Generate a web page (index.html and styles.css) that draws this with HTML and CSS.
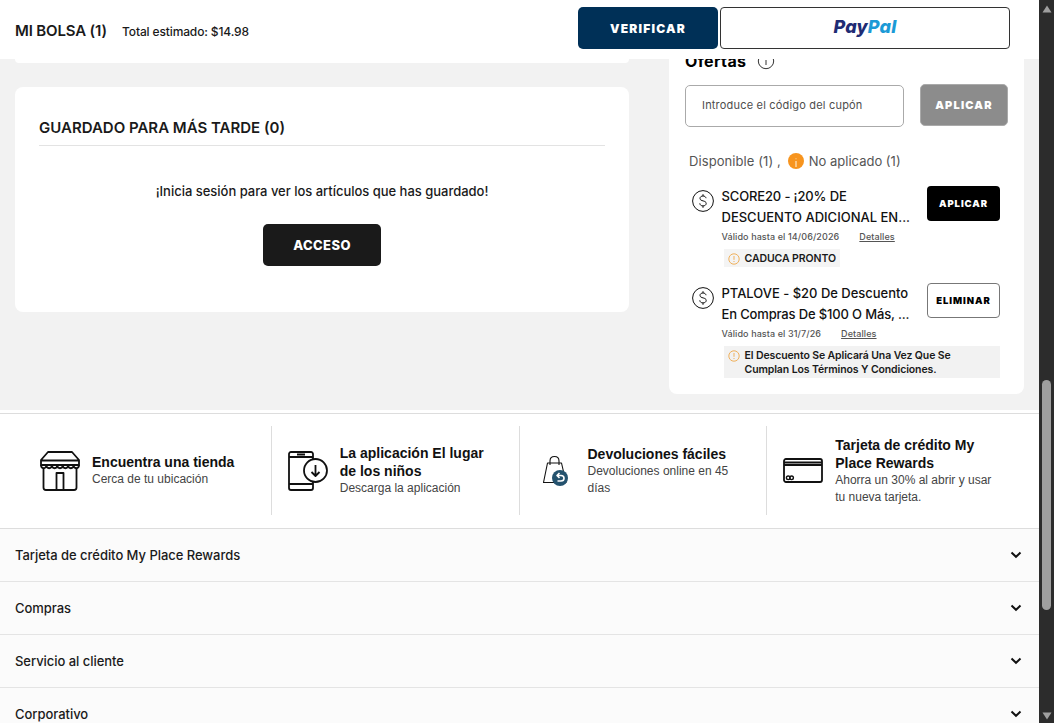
FILE: index.html
```html
<!DOCTYPE html>
<html lang="es">
<head>
<meta charset="utf-8">
<title>Mi bolsa</title>
<link rel="stylesheet" href="styles.css">
</head>
<body>
<div class="page">
  <header class="bag-bar">
    <h1 class="bag-title">MI BOLSA (1)</h1>
    <span class="bag-total">Total estimado: $14.98</span>
    <div class="bag-actions">
      <button class="btn checkout">VERIFICAR</button>
      <button class="btn paypal"><span class="pay">Pay</span><span class="pal">Pal</span></button>
    </div>
  </header>

  <main class="bag">
    <div class="bag-main">
      <div class="items-end"></div>
      <section class="card saved">
        <h2 class="saved-title">GUARDADO PARA MÁS TARDE (0)</h2>
        <p class="saved-text">¡Inicia sesión para ver los artículos que has guardado!</p>
        <button class="btn login">ACCESO</button>
      </section>
    </div>
    <aside class="offers">
      <div class="offers-head">
        <h2 class="offers-title">Ofertas</h2>
        <svg class="info" viewBox="0 0 18 18"><circle cx="9" cy="9" r="7.7"/><path d="M9 8v5M9 5v1.2"/></svg>
      </div>
      <div class="code-row">
        <div class="code-input">Introduce el código del cupón</div>
        <button class="btn code-apply">APLICAR</button>
      </div>
      <div class="status">
        <span class="available">Disponible (1) ,</span>
        <svg class="status-icon" viewBox="0 0 16 16"><circle cx="8" cy="8" r="8" fill="#f7941e"/><path d="M8 8v6" stroke="#fde0b8" stroke-width="1.3"/><circle cx="8" cy="5.8" r=".7" fill="#fbc27c"/></svg>
        <span class="not-applied">No aplicado (1)</span>
      </div>

      <article class="coupon">
        <svg class="coin" viewBox="0 0 22 22"><circle cx="11" cy="11" r="10.4"/><path d="M14 8.200C13.800 6.800 12.700 6 11 6 9.300 6 8 6.900 8 8.400c0 3.300 6.200 1.700 6.200 5 0 1.500-1.300 2.500-3.200 2.500s-3.100-1-3.200-2.600M11 4.200V6M11 15.900v1.900"/></svg>
        <div class="coupon-body">
          <h3 class="coupon-title"><span class="t1">SCORE20 - ¡20% DE</span><br><span class="t2">DESCUENTO ADICIONAL EN...</span></h3>
          <div class="coupon-meta"><span class="valid">Válido hasta el 14/06/2026</span><a class="details">Detalles</a></div>
          <div class="tag"><svg class="tag-icon" viewBox="0 0 12 12"><circle cx="6" cy="6" r="5.200"/><path d="M6 3v3.800M6 8v1"/></svg><span class="soon">CADUCA PRONTO</span></div>
        </div>
        <button class="btn coupon-btn apply">APLICAR</button>
      </article>

      <article class="coupon">
        <svg class="coin" viewBox="0 0 22 22"><circle cx="11" cy="11" r="10.4"/><path d="M14 8.200C13.800 6.800 12.700 6 11 6 9.300 6 8 6.900 8 8.400c0 3.300 6.200 1.700 6.200 5 0 1.500-1.300 2.500-3.200 2.500s-3.100-1-3.200-2.600M11 4.200V6M11 15.900v1.900"/></svg>
        <div class="coupon-body">
          <h3 class="coupon-title"><span class="t3">PTALOVE - $20 De Descuento</span><br><span class="t4">En Compras De $100 O Más, ...</span></h3>
          <div class="coupon-meta"><span class="valid">Válido hasta el 31/7/26</span><a class="details">Detalles</a></div>
          <div class="tag long"><svg class="tag-icon" viewBox="0 0 12 12"><circle cx="6" cy="6" r="5.200"/><path d="M6 3v3.800M6 8v1"/></svg><span>El Descuento Se Aplicará Una Vez Que Se<br>Cumplan Los Términos Y Condiciones.</span></div>
        </div>
        <button class="btn coupon-btn remove">ELIMINAR</button>
      </article>
    </aside>
  </main>

  <section class="features">
    <div class="feature">
      <svg class="f-icon" viewBox="0 0 40 40"><path d="M8 1h24l7 8v5H1V9zM1 9.500h38M3.500 17v19.500a2.500 2.500 0 0 0 2.500 2.500h28a2.500 2.500 0 0 0 2.500-2.500V17M16.500 39V22h7v17"/><path d="M1 14c0 4.300 5.400 4.300 5.400 0 0 4.300 5.500 4.300 5.500 0 0 4.300 5.400 4.300 5.400 0 0 4.300 5.400 4.300 5.400 0 0 4.300 5.400 4.300 5.400 0 0 4.300 5.500 4.300 5.500 0 0 4.300 5.400 4.300 5.400 0"/></svg>
      <div><h3 class="f-title">Encuentra una tienda</h3><p class="f-text">Cerca de tu ubicación</p></div>
    </div>
    <div class="feature">
      <svg class="f-icon" viewBox="0 0 40 40"><path d="M25 8V3a2 2 0 0 0-2-2H3a2 2 0 0 0-2 2v34a2 2 0 0 0 2 2h20a2 2 0 0 0 2-2v-6M1 6h24M1 33h24M9 3.500h8"/><circle cx="27.500" cy="19.500" r="11.500" fill="#fff"/><path d="M27.500 14v10.500M23.500 21l4 4 4-4"/></svg>
      <div><h3 class="f-title">La aplicación El lugar<br>de los niños</h3><p class="f-text">Descarga la aplicación</p></div>
    </div>
    <div class="feature">
      <svg class="f-icon bag-icon" viewBox="0 0 40 40"><path d="M11.500 12h14l4.500 19.500H7.500zM14 14v-4c0-6 9-6 9 0v4"/><circle cx="24" cy="27" r="8" fill="#24526e" stroke="none"/><path d="M21.500 30H25c4 0 4-5.500 0-5.500h-3.500M23.500 22 21 24.500l2.500 2.500" stroke="#fff" stroke-width="1.600"/></svg>
      <div><h3 class="f-title">Devoluciones fáciles</h3><p class="f-text">Devoluciones online en 45<br>días</p></div>
    </div>
    <div class="feature">
      <svg class="f-icon" viewBox="0 0 40 40"><rect x="1" y="8" width="38" height="23" rx="2"/><path d="M1 11.500h38M1 14h38"/><circle cx="5.200" cy="26.800" r="1.800" stroke-width="1.400"/><circle cx="8.600" cy="26.800" r="1.800" stroke-width="1.400"/></svg>
      <div><h3 class="f-title">Tarjeta de crédito My<br>Place Rewards</h3><p class="f-text">Ahorra un 30% al abrir y usar<br>tu nueva tarjeta.</p></div>
    </div>
  </section>

  <nav class="links">
    <div class="link-row"><span>Tarjeta de crédito My Place Rewards</span><svg class="chev" viewBox="0 0 12 8"><path d="M1.500 1.500 6 5.800l4.500-4.300"/></svg></div>
    <div class="link-row"><span>Compras</span><svg class="chev" viewBox="0 0 12 8"><path d="M1.500 1.500 6 5.800l4.500-4.300"/></svg></div>
    <div class="link-row"><span>Servicio al cliente</span><svg class="chev" viewBox="0 0 12 8"><path d="M1.500 1.500 6 5.800l4.500-4.300"/></svg></div>
    <div class="link-row"><span>Corporativo</span><svg class="chev" viewBox="0 0 12 8"><path d="M1.500 1.500 6 5.800l4.500-4.300"/></svg></div>
  </nav>
</div>
<div class="scrollbar">
  <svg class="arrow" viewBox="0 0 10 8"><path d="M5 .5 9.500 7.500H.5z"/></svg>
  <div class="thumb"></div>
  <svg class="arrow" viewBox="0 0 10 8"><path d="M.5.5h9L5 7.500z"/></svg>
</div>
</body>
</html>
```

FILE: styles.css
```css
* { box-sizing: border-box; margin: 0; padding: 0; }
body {
  display: flex;
  width: 1054px;
  height: 723px;
  overflow: hidden;
  font-family: Inter, "Liberation Sans", sans-serif;
  color: #1a1a1a;
  background: #fff;
}
svg { display: block; flex: none; fill: none; }
.page { width: 1039px; height: 723px; overflow: hidden; }
.btn {
  display: flex;
  align-items: center;
  justify-content: center;
  border: 0;
  border-radius: 5px;
  color: #fff;
  font-family: inherit;
  font-weight: 800;
  white-space: nowrap;
}

/* sticky bag bar */
.bag-bar {
  position: relative;
  z-index: 1;
  display: flex;
  align-items: center;
  height: 59px;
  padding: 0 29px 3px 15px;
  background: #fff;
}
.bag-title { width: 107px; padding-top: 5px; font-size: 15px; font-weight: 600; letter-spacing: -.15px; white-space: nowrap; }
.bag-total { padding-top: 6px; font-size: 12px; font-weight: 500; letter-spacing: -.13px; }
.bag-actions { display: flex; gap: 2px; margin-left: auto; }
.checkout { width: 140px; height: 42px; background: #003057; font-size: 12px; font-weight: 900; letter-spacing: 1.2px; }
.paypal { width: 290px; height: 42px; padding-bottom: 3px; border: 1px solid #333; border-radius: 4px; background: #fff; font-size: 18px; font-style: italic; letter-spacing: .2px; }
.pay { color: #1f2c74; }
.pal { color: #1b9ad6; }

/* bag content */
.bag { display: flex; gap: 40px; height: 351px; padding: 0 15px; background: #f2f2f2; }
.bag-main { width: 614px; }
.items-end { height: 4px; margin-bottom: 24px; border-radius: 0 0 8px 8px; background: #fff; }
.saved { display: flex; flex-direction: column; align-items: center; height: 225px; padding: 30px 24px 0; border-radius: 8px; background: #fff; }
.saved-title { align-self: stretch; height: 29px; border-bottom: 1px solid #e3e3e3; font-size: 15px; font-weight: 600; line-height: 22px; letter-spacing: 0; }
.saved-text { margin-top: 35px; font-size: 13px; font-weight: 500; line-height: 20px; letter-spacing: -.02px; }
.login { width: 118px; height: 42px; margin-top: 23px; background: #1a1a1a; font-size: 13px; letter-spacing: .4px; }

.offers { width: 355px; height: 347px; margin-top: -12px; padding: 0 16px; border-radius: 8px; background: #fff; }
.offers-head { display: flex; align-items: center; gap: 11px; height: 28px; }
.offers-title { color: #000; font-size: 16px; font-weight: 700; letter-spacing: .35px; }
.info { width: 18px; height: 18px; stroke: #333; }
.code-row { display: flex; gap: 16px; margin-top: 9px; height: 43px; }
.code-input { width: 219px; height: 42px; margin-top: 1px; padding-left: 16px; border: 1px solid #aaa; border-radius: 5px; color: #4d4d4d; font-size: 11px; line-height: 39px; letter-spacing: .19px; }
.code-apply { width: 88px; height: 42px; border: 1px solid #aaa; background: #8c8c8c; font-size: 11px; font-weight: 900; letter-spacing: 1.2px; }
.status { display: flex; align-items: center; height: 16px; margin: 26px 0 17px 4px; color: #555; font-size: 13px; }
.available { letter-spacing: .08px; }
.status-icon { width: 16px; height: 16px; margin: 0 5px 0 7px; }
.coupon { display: flex; height: 97px; padding-left: 7px; }
.coin { width: 22px; height: 22px; margin: 4px 7.500px 0 0; stroke: #111; }
.coupon-body { width: 205.500px; white-space: nowrap; }
.coupon-title { color: #111; font-size: 13px; font-weight: 500; line-height: 21px; }
.t1 { letter-spacing: -.14px; }
.t3 { letter-spacing: -.02px; }
.t4 { letter-spacing: -.15px; }
.coupon-meta { display: flex; gap: 20px; height: 21px; color: #555; font-size: 9px; font-weight: 500; line-height: 18px; letter-spacing: .1px; }
.details { text-decoration: underline; }
.tag { display: flex; width: 116px; height: 18px; margin-left: 2.500px; padding: 3px 4px; background: #f4f4f4; font-size: 10.5px; font-weight: 600; line-height: 13px; letter-spacing: -.08px; }
.tag.long { width: 276px; height: 32px; padding-top: 3px; background: #f2f2f2; line-height: 14px; letter-spacing: -.11px; }
.tag-icon { width: 12px; height: 12px; margin: 1px 4.500px 0 0; stroke: #efb05c; }
.coupon-btn { width: 73px; height: 35px; border-radius: 4px; font-size: 9.5px; font-weight: 900; letter-spacing: .95px; }
.apply { background: #000; }
.remove { border: 1px solid #777; background: #fff; color: #000; letter-spacing: .95px; }

/* service features */
.features { display: flex; height: 116px; margin-top: 3px; padding: 12px 24px 13px; border-top: 1px solid #ddd; border-bottom: 1px solid #ddd; }
.feature { display: flex; align-items: center; gap: 12px; width: 247.800px; height: 89px; padding-left: 16px; border-right: 1px solid #ddd; font-family: "Liberation Sans", Arial, sans-serif; white-space: nowrap; }
.feature:last-child { border-right: 0; }
.f-icon { width: 40px; height: 40px; stroke: #111; stroke-width: 1.800; stroke-linejoin: round; }
.bag-icon { stroke-width: 1.100; }
.f-title { color: #111; font-size: 14px; line-height: 18px; letter-spacing: 0; }
.f-text { color: #444; font-size: 12px; line-height: 17px; }

/* footer links */
.links { background: #fbfbfb; }
.link-row { display: flex; align-items: center; justify-content: space-between; height: 53px; padding: 0 17px 0 15px; border-bottom: 1px solid #e4e4e4; font-size: 13px; font-weight: 500; letter-spacing: -.04px; }
.chev { width: 12px; height: 8px; stroke: #111; stroke-width: 2; }

/* window scrollbar */
.scrollbar { display: flex; flex-direction: column; align-items: center; width: 15px; height: 723px; padding: 5px 0 3px; background: #2c2c2c; }
.arrow { width: 10px; height: 8px; fill: #9f9f9f; }
.thumb { width: 9px; height: 230px; margin: 367px 0 auto; border-radius: 5px; background: #9f9f9f; }
```
